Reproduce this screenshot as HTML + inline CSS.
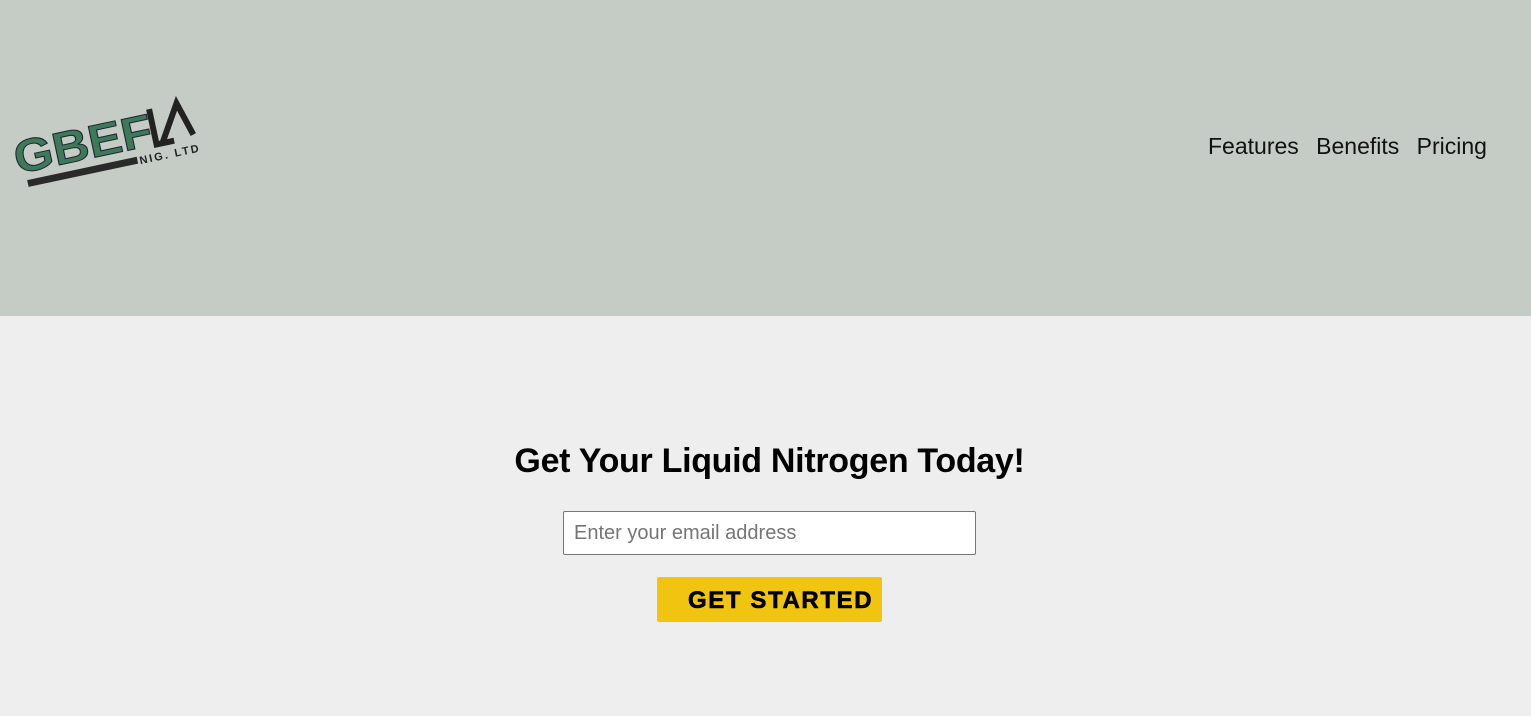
<!DOCTYPE html>
<html><head><style>
body{margin:0;width:1531px;height:716px;background:#eeeeee;font-family:"Liberation Sans",sans-serif;overflow:hidden}
header{position:absolute;left:0;top:0;width:1531px;height:316px;background:#c5ccc5}
nav{position:absolute;top:133px;left:1208px;font-size:23px;color:#111;white-space:nowrap}
nav span{margin-right:11px}
h1{position:absolute;top:442px;left:0;width:1539px;text-align:center;margin:0;font-size:34px;font-weight:bold;color:#000;letter-spacing:-0.3px}
.inp{position:absolute;left:563px;top:511px;width:411px;height:42px;border:1px solid #767676;border-radius:2px;background:#fff;box-sizing:content-box}
.inp span{position:absolute;left:10px;top:10px;font-size:20px;color:#757575}
.btn{position:absolute;left:657px;top:577px;width:225px;height:45px;background:#f1c40f;border-radius:2px}
.btn span{position:absolute;left:31px;top:10px;font-size:24px;font-weight:bold;color:#000;letter-spacing:1.6px;-webkit-text-stroke:0.6px #000}
</style></head><body>
<header>
<svg style="position:absolute;left:0;top:78px" width="210" height="110">
<g transform="rotate(-12 100 60)">
<text x="12" y="78" font-family="Liberation Sans" font-weight="bold" font-size="46" fill="#3d7a5a" stroke="#223" stroke-width="1" textLength="140" lengthAdjust="spacingAndGlyphs">GBEF</text>
<path d="M154 42 L154 78 L172 78 M160 78 L182 42 L192 76" fill="none" stroke="#222" stroke-width="6"/>
<rect x="20" y="86" width="112" height="7" fill="#2a2a2a"/>
<text x="134" y="94" font-family="Liberation Sans" font-weight="bold" font-size="11" fill="#222" letter-spacing="2">NIG. LTD</text>
</g>
</svg>
<nav><span>Features</span> <span>Benefits</span> <span>Pricing</span></nav>
</header>
<h1>Get Your Liquid Nitrogen Today!</h1>
<div class="inp"><span>Enter your email address</span></div>
<div class="btn"><span>GET STARTED</span></div>
</body></html>
